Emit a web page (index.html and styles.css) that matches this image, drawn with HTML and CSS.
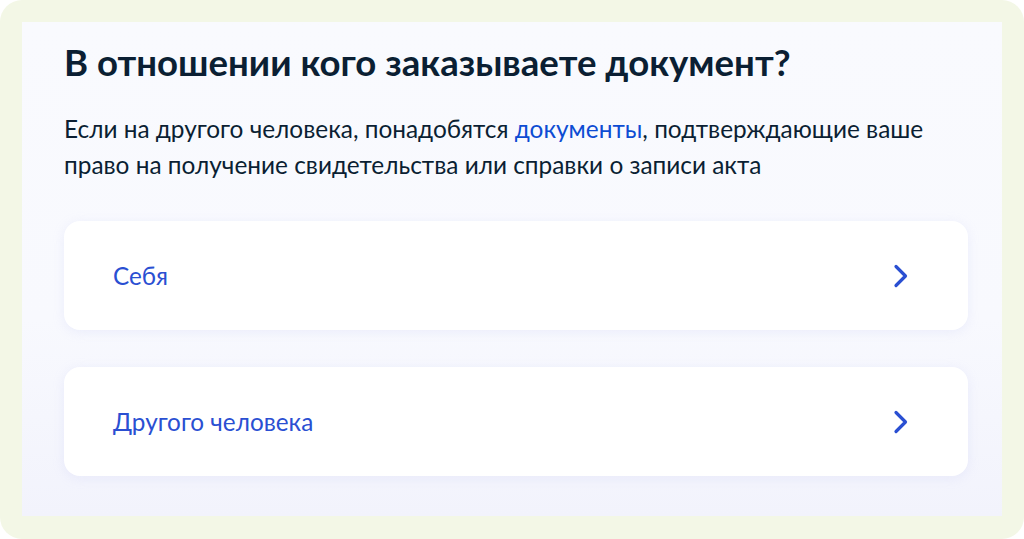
FILE: index.html
```html
<!DOCTYPE html>
<html lang="ru">
<head>
<meta charset="utf-8">
<link rel="stylesheet" href="styles.css">
</head>
<body>
<div class="frame">
  <div class="panel">
    <h1 class="title">В отношении кого заказываете документ?</h1>
    <p class="lead">Если на другого человека, понадобятся <a class="link" href="#">документы</a>, подтверждающие ваше право на получение свидетельства или справки о записи акта</p>
    <div class="options">
      <a class="option" href="#">
        <span class="option-text">Себя</span>
        <svg class="chevron" width="16" height="24" viewBox="0 0 16 24"><path d="M3 2.5 L12.5 12 L3 21.5" fill="none" stroke="#2a4fd2" stroke-width="3.2" stroke-linecap="round" stroke-linejoin="round"/></svg>
      </a>
      <a class="option" href="#">
        <span class="option-text">Другого человека</span>
        <svg class="chevron" width="16" height="24" viewBox="0 0 16 24"><path d="M3 2.5 L12.5 12 L3 21.5" fill="none" stroke="#2a4fd2" stroke-width="3.2" stroke-linecap="round" stroke-linejoin="round"/></svg>
      </a>
    </div>
  </div>
</div>
</body>
</html>
```

FILE: styles.css
```css
html, body {
  margin: 0;
  padding: 0;
  background: #ffffff;
}
body {
  width: 1024px;
  height: 539px;
  overflow: hidden;
  font-family: Lato, "Noto Sans", sans-serif;
}
.frame {
  box-sizing: border-box;
  width: 1024px;
  height: 539px;
  background: #f3f7e6;
  border-radius: 22px;
  padding: 22px 22px 23px 22px;
}
.panel {
  box-sizing: border-box;
  height: 100%;
  background: linear-gradient(180deg, #f9fafe 0%, #f8f9fe 60%, #f2f3fc 100%);
  padding: 0 34px 0 42px;
}
.title {
  margin: 0;
  padding-top: 18px;
  font-size: 36.6px;
  line-height: 44px;
  font-weight: 700;
  color: #0b1f33;
}
.lead {
  margin: 27px 0 0 0;
  font-size: 24.4px;
  line-height: 36px;
  color: #0b1f33;
  max-width: 890px;
}
.link {
  color: #0d4cd3;
  text-decoration: none;
}
.options {
  display: flex;
  flex-direction: column;
  gap: 37px;
  margin-top: 38px;
}
.option {
  display: flex;
  align-items: center;
  justify-content: space-between;
  height: 109px;
  box-sizing: border-box;
  padding: 0 59px 0 49px;
  background: #ffffff;
  border-radius: 16px;
  box-shadow: 0 2px 12px rgba(180, 185, 240, 0.18);
  text-decoration: none;
}
.option-text {
  font-size: 24.3px;
  color: #2a4fd2;
}
.chevron {
  display: block;
}
```
